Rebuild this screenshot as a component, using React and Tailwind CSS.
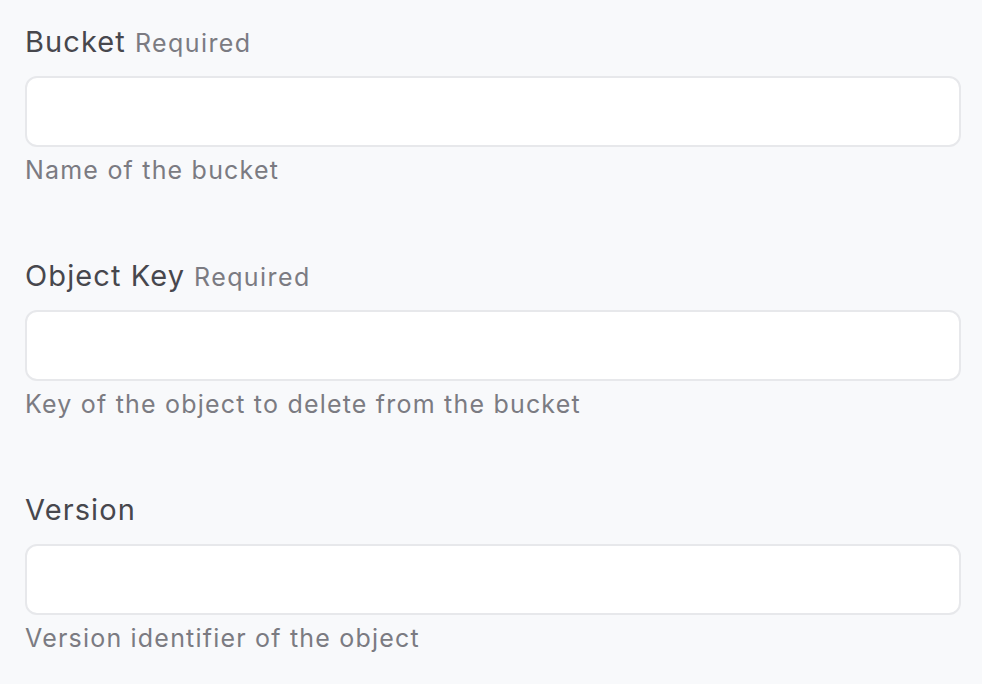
import React from "react";

const fields = [
  { label: "Bucket", required: true, help: "Name of the bucket" },
  { label: "Object Key", required: true, help: "Key of the object to delete from the bucket" },
  { label: "Version", required: false, help: "Version identifier of the object" },
];

function Field({ label, required, help }) {
  return (
    <div className="flex flex-col">
      <label className="flex items-baseline gap-[9px] h-[34px] leading-[34px]">
        <span className="text-[29px] tracking-[1.1px] text-[#47474d]">{label}</span>
        {required && <span className="text-[25px] tracking-[1.4px] text-[#7b7b82]">Required</span>}
      </label>
      <input
        type="text"
        className="mt-[17px] h-[71px] w-full rounded-[12px] border-2 border-[#e7e8eb] bg-white px-4 outline-none"
      />
      <p className="mt-[9px] h-[29px] leading-[29px] text-[25px] tracking-[1.2px] text-[#7b7b82]">{help}</p>
    </div>
  );
}

export default function App() {
  return (
    <div
      className="min-h-screen w-full bg-[#f8f9fb] pl-[25px] pr-[21px] pt-[25px]"
      style={{ fontFamily: 'Inter, "Liberation Sans", Arial, sans-serif' }}
    >
      <div className="flex flex-col gap-[74px]">
        {fields.map((f) => (
          <Field key={f.label} {...f} />
        ))}
      </div>
    </div>
  );
}
